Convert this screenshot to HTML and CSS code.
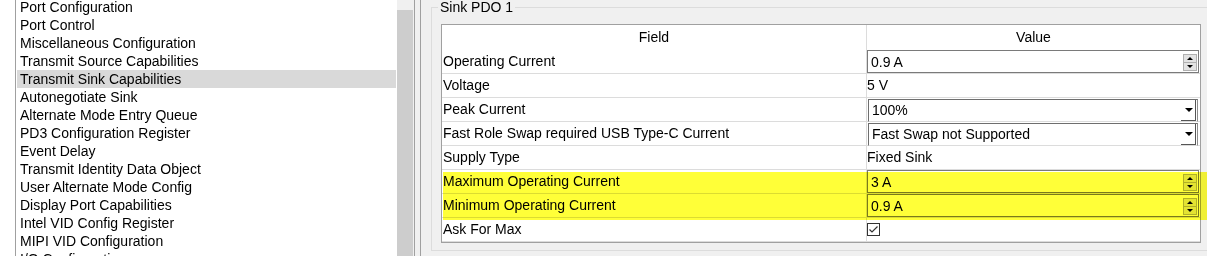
FILE: index.html
```html
<!DOCTYPE html>
<html lang="en">
<head>
    <meta charset="UTF-8">
    <title>Sink Capabilities</title>
    <link rel="stylesheet" href="styles.css">
</head>
<body>
    <div class="app">
        <aside class="nav">
            <ul class="pages">
                <li>Port Configuration</li>
                <li>Port Control</li>
                <li>Miscellaneous Configuration</li>
                <li>Transmit Source Capabilities</li>
                <li class="selected">Transmit Sink Capabilities</li>
                <li>Autonegotiate Sink</li>
                <li>Alternate Mode Entry Queue</li>
                <li>PD3 Configuration Register</li>
                <li>Event Delay</li>
                <li>Transmit Identity Data Object</li>
                <li>User Alternate Mode Config</li>
                <li>Display Port Capabilities</li>
                <li>Intel VID Config Register</li>
                <li>MIPI VID Configuration</li>
                <li>I/O Configuration</li>
            </ul>
            <div class="scroll"><div class="thumb"></div></div>
        </aside>
        <div class="splitter"></div>
        <main class="panel">
            <fieldset class="group">
                <legend>Sink PDO 1</legend>
                <div class="grid">
                    <div class="head field">Field</div>
                    <div class="head value">Value</div>

                    <div class="cell field">Operating Current</div>
                    <div class="cell value">
                        <div class="spin"><span>0.9 A</span><div class="spin-btns"><b class="up"></b><b class="down"></b></div></div>
                    </div>

                    <div class="cell field">Voltage</div>
                    <div class="cell value plain">5 V</div>

                    <div class="cell field">Peak Current</div>
                    <div class="cell value">
                        <div class="combo"><span>100%</span><div class="combo-btn"><b class="down"></b></div></div>
                    </div>

                    <div class="cell field">Fast Role Swap required USB Type-C Current</div>
                    <div class="cell value">
                        <div class="combo"><span>Fast Swap not Supported</span><div class="combo-btn"><b class="down"></b></div></div>
                    </div>

                    <div class="cell field">Supply Type</div>
                    <div class="cell value plain">Fixed Sink</div>

                    <div class="cell field">Maximum Operating Current</div>
                    <div class="cell value">
                        <div class="spin"><span>3 A</span><div class="spin-btns"><b class="up"></b><b class="down"></b></div></div>
                    </div>

                    <div class="cell field">Minimum Operating Current</div>
                    <div class="cell value">
                        <div class="spin"><span>0.9 A</span><div class="spin-btns"><b class="up"></b><b class="down"></b></div></div>
                    </div>

                    <div class="cell field">Ask For Max</div>
                    <div class="cell value">
                        <span class="check">
                            <svg width="11" height="11" viewBox="0 0 11 11"><polyline points="1.5,5.5 4,8 9.5,2.5" fill="none" stroke="#333" stroke-width="1.2"/></svg>
                        </span>
                    </div>
                </div>
            </fieldset>
        </main>
        <div class="highlight"></div>
    </div>
</body>
</html>
```

FILE: styles.css
```css
* {
    box-sizing: border-box;
}
body {
    margin: 0;
    font-family: "Liberation Sans", Arial, sans-serif;
    font-size: 14px;
    color: #000;
    background-color: #f0f0f0;
}
.app {
    position: relative;
    display: flex;
    height: 256px;
    overflow: hidden;
}
.nav {
    display: flex;
    width: 413px;
    padding-left: 15px;
    background-color: #fff;
}
.pages {
    width: 382px;
    margin: -2px 0 0;
    padding: 0;
    list-style: none;
    border-left: 1px solid #a0a0a0;
}
.pages li {
    height: 18px;
    line-height: 18px;
    margin: 0 1px 0 1px;
    padding-left: 3px;
    white-space: nowrap;
}
.pages li.selected {
    background-color: #d9d9d9;
}
.scroll {
    width: 16px;
    background-color: #f0f0f0;
}
.scroll .thumb {
    margin-top: 10px;
    height: 100%;
    background-color: #cdcdcd;
}
.splitter {
    width: 7px;
    margin-left: 1px;
    border-left: 1px solid #a0a0a0;
    border-right: 1px solid #a0a0a0;
}
.panel {
    flex: 1;
    padding-left: 10px;
    overflow: hidden;
}
.group {
    width: 820px;
    margin: -1px 0 0;
    padding: 9px 0 7px 9px;
    border: 1px solid #dcdcdc;
    min-width: 0;
}
.group legend {
    margin-left: -3px;
    padding: 0 2px;
    line-height: 16px;
}
.grid {
    display: grid;
    grid-template-columns: 425px 333px;
    width: 760px;
    border: 1px solid #a0a0a0;
    background-color: #fff;
}
.head {
    height: 25px;
    line-height: 25px;
    text-align: center;
}
.head.field {
    border-right: 1px solid #dcdcdc;
}
.cell {
    height: 24px;
    border-bottom: 1px solid #dcdcdc;
    white-space: nowrap;
}
.cell.field {
    padding-left: 1px;
    line-height: 23px;
    border-right: 1px solid #dcdcdc;
}
.cell.value {
    display: flex;
    align-items: center;
}
.cell.plain {
    line-height: 23px;
}
.spin,
.combo {
    display: flex;
    align-items: center;
    width: 332px;
    height: 23px;
    padding-left: 3px;
    border: 1px solid #7a7a7a;
    background-color: #fff;
}
.spin span,
.combo span {
    flex: 1;
}
.spin-btns {
    display: flex;
    flex-direction: column;
    width: 14px;
    margin: 1px 1px 0 0;
}
.spin-btns b {
    display: flex;
    align-items: center;
    justify-content: center;
    height: 9px;
    background-color: #e3e3e3;
    border: 1px solid #b0b0b0;
}
.spin-btns b + b {
    margin-top: -1px;
}
.up::after,
.down::after {
    content: '';
    border-left: 3px solid transparent;
    border-right: 3px solid transparent;
}
.up::after {
    border-bottom: 3px solid #000;
}
.down::after {
    border-top: 3px solid #000;
}
.combo {
    height: 23px;
    margin-top: 1px;
    margin-left: 1px;
    width: 330px;
    border-color: #6e6e6e #8c8c8c #dcdcdc #6e6e6e;
}
.combo-btn {
    display: flex;
    align-self: stretch;
    width: 15px;
    margin-right: 1px;
    border-right: 1px solid #555;
    border-bottom: 1px solid #555;
}
.combo-btn b {
    flex: 1;
    display: flex;
    align-items: center;
    justify-content: center;
    padding-left: 1px;
}
.combo-btn .down::after {
    border-left-width: 4px;
    border-right-width: 4px;
    border-top-width: 4px;
}
.check {
    display: flex;
    align-items: center;
    justify-content: center;
    width: 13px;
    height: 13px;
    border: 1px solid #333;
    background-color: #fff;
}
.highlight {
    position: absolute;
    left: 443px;
    top: 172px;
    width: 780px;
    height: 48px;
    background-color: #ffff38;
    mix-blend-mode: multiply;
    pointer-events: none;
}
```
